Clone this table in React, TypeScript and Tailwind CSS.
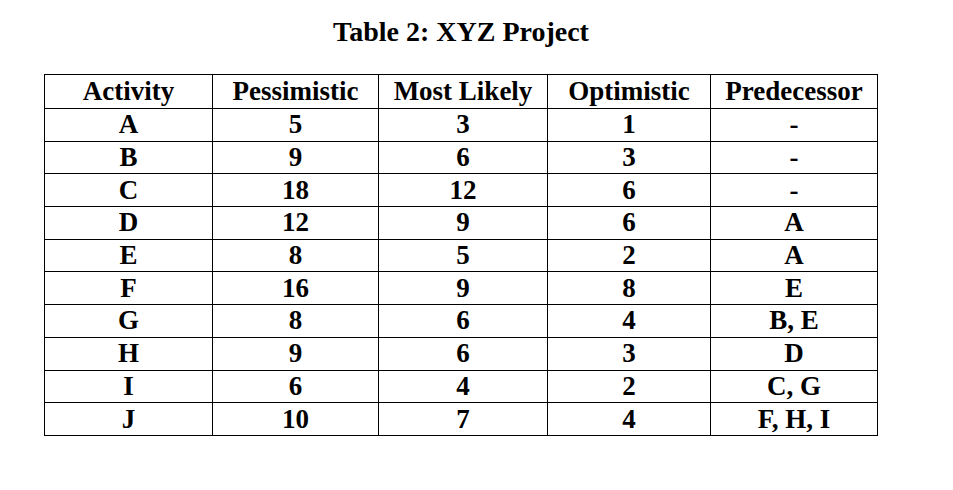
import React from 'react';

const rows = [
  ['A', '5', '3', '1', '-'],
  ['B', '9', '6', '3', '-'],
  ['C', '18', '12', '6', '-'],
  ['D', '12', '9', '6', 'A'],
  ['E', '8', '5', '2', 'A'],
  ['F', '16', '9', '8', 'E'],
  ['G', '8', '6', '4', 'B, E'],
  ['H', '9', '6', '3', 'D'],
  ['I', '6', '4', '2', 'C, G'],
  ['J', '10', '7', '4', 'F, H, I'],
];

const headers = ['Activity', 'Pessimistic', 'Most Likely', 'Optimistic', 'Predecessor'];
const widths = ['w-[168px]', 'w-[166px]', 'w-[169px]', 'w-[163px]', 'w-[167px]'];

export default function App() {
  return (
    <div className="min-h-screen w-full bg-white text-black font-['Liberation_Serif','Times_New_Roman',serif]">
      <div className="pl-[44px] pt-[18px] w-[878px]">
        <h1 className="text-center text-[28px] leading-none font-bold mb-[28px]">Table 2: XYZ Project</h1>

        <table className="border-collapse table-fixed w-[834px] text-[27px] font-bold leading-none">
          <colgroup>
            {widths.map((w, i) => (
              <col key={i} className={w} />
            ))}
          </colgroup>
          <thead>
            <tr className="h-[34px]">
              {headers.map(h => (
                <th key={h} className="border border-black p-0 text-center align-middle font-bold">
                  {h}
                </th>
              ))}
            </tr>
          </thead>
          <tbody>
            {rows.map(row => (
              <tr key={row[0]} className="h-[32.7px]">
                {row.map((cell, i) => (
                  <td key={i} className="border border-black p-0 text-center align-middle">
                    {cell}
                  </td>
                ))}
              </tr>
            ))}
          </tbody>
        </table>
      </div>
    </div>
  );
}
